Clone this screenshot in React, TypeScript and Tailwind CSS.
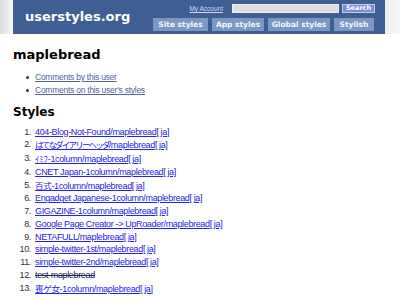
import React from "react";

type Item = { jp?: string; jpTrack?: string; rest: string; strike?: boolean };

const items: Item[] = [
  { rest: "404-Blog-Not-Found/maplebread" },
  { jp: "はてなダイアリーヘッダ", jpTrack: "tracking-[-1.8px]", rest: "/maplebread" },
  { jp: "ｲﾐﾌ", jpTrack: "tracking-[0px]", rest: "-1column/maplebread" },
  { rest: "CNET Japan-1column/maplebread" },
  { jp: "百式", jpTrack: "tracking-[-0.3px]", rest: "-1column/maplebread" },
  { rest: "Engadget Japanese-1column/maplebread" },
  { rest: "GIGAZINE-1column/maplebread" },
  { rest: "Google Page Creator -> UpRoader/maplebread" },
  { rest: "NETAFULL/maplebread" },
  { rest: "simple-twitter-1st/maplebread" },
  { rest: "simple-twitter-2nd/maplebread" },
  { rest: "test-maplebread", strike: true },
  { jp: "喪ゲ女", jpTrack: "tracking-[-0.3px]", rest: "-1column/maplebread" },
];

const sans = "font-['Liberation_Sans','Noto_Sans_CJK_JP',sans-serif]";
const jpSans = "font-['Noto_Sans_CJK_JP',sans-serif]";
const bold = "font-['DejaVu_Sans','Noto_Sans_CJK_JP',sans-serif] font-bold";

export default function App() {
  return (
    <div className="w-[400px] h-[300px] bg-white overflow-hidden">
      {/* header row */}
      <div className="flex h-[34px]">
        <div className="w-[13px] h-full bg-gradient-to-r from-[#dcdcdc] to-[#f6f6f6]" />
        <div className="w-[372px] h-full bg-[#3e5e94] flex">
          <div className={`pl-[12px] pt-[9px] text-[13px] leading-[16px] text-white ${bold}`}>
            userstyles.org
          </div>
          <div className="ml-auto flex flex-col items-end pr-[10px]">
            <div className="mt-[4px] h-[9px] flex items-center">
              <span className={`text-[6.5px] leading-[9px] text-[#cfd8ea] underline ${sans}`}>My Account</span>
              <div className="ml-[9px] w-[107px] h-[9px] bg-[#dedede] border border-[#eeeeee]" />
              <div className={`ml-[3px] w-[33px] h-[9px] bg-[#7b8dd2] border border-[#c4cbea] flex items-center justify-center text-white text-[6.5px] leading-[7px] ${bold}`}>
                Search
              </div>
            </div>
            <div className={`mt-[5px] h-[13px] flex gap-[4px] mr-[1px] text-[#f4f6fb] text-[7.5px] ${bold}`}>
              <div className="w-[55px] h-full bg-[#7d97c4] flex items-center justify-center">Site styles</div>
              <div className="w-[52px] h-full bg-[#7d97c4] flex items-center justify-center">App styles</div>
              <div className="w-[62px] h-full bg-[#7d97c4] flex items-center justify-center">Global styles</div>
              <div className="w-[40px] h-full bg-[#7d97c4] flex items-center justify-center">Stylish</div>
            </div>
          </div>
        </div>
        <div className="w-[15px] h-full bg-gradient-to-r from-[#eeeeee] to-[#f8f8f8]" />
      </div>

      {/* content */}
      <div className="pl-[13px]">
        <h1 className={`mt-[14px] text-[13px] leading-[14px] text-black ${bold}`}>maplebread</h1>
        <ul className={`mt-[9px] text-[8.5px] tracking-[-0.25px] leading-[13.3px] ${sans}`}>
          {["Comments by this user", "Comments on this user's styles"].map((t) => (
            <li key={t} className="flex items-center">
              <span className="w-[3px] h-[3px] bg-[#333] rounded-full ml-[13px] mr-[6px]" />
              <a className="text-[#52649e] underline">{t}</a>
            </li>
          ))}
        </ul>
        <h2 className={`mt-[7px] text-[12px] leading-[14px] text-black ${bold}`}>Styles</h2>
        <ol className={`mt-[7px] text-[9px] tracking-[-0.35px] leading-[12.75px] ${sans}`}>
          {items.map((it, i) => (
            <li key={i} className="flex whitespace-nowrap">
              <span className="w-[18px] text-right text-[#333] shrink-0">{i + 1}.</span>
              <a
                className={`ml-[4px] ${it.strike ? "line-through text-[#20205a]" : "underline text-[#2424e6]"}`}
              >
                {it.jp && (
                  <span className={`text-[8.5px] ${jpSans} ${it.jpTrack}`}>{it.jp}</span>
                )}
                {it.rest}
                {!it.strike && (
                  <>
                    <span className="mr-[2px]">[</span>ja]
                  </>
                )}
              </a>
            </li>
          ))}
        </ol>
      </div>
    </div>
  );
}
